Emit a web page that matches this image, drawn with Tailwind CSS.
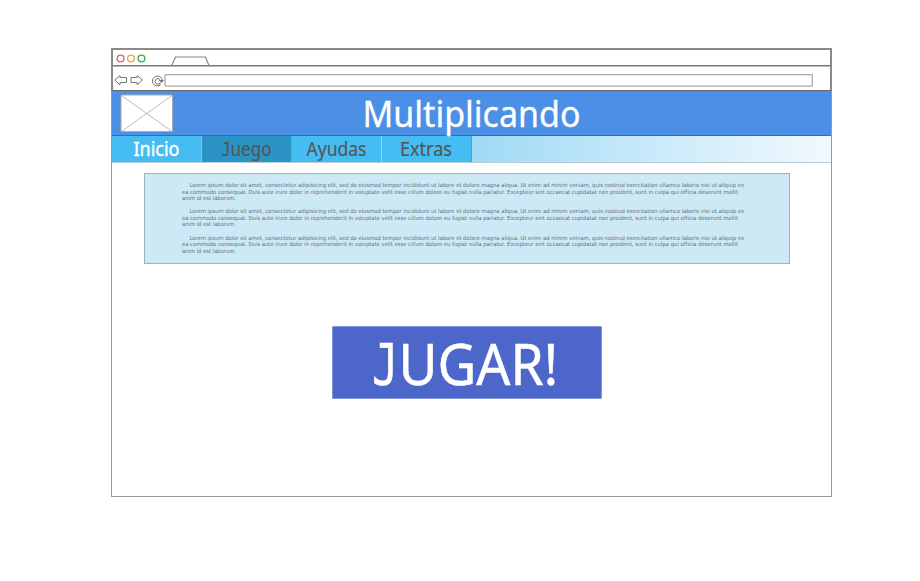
<!DOCTYPE html>
<html lang="es">
<head>
<meta charset="utf-8">
<title>Multiplicando</title>
<script src="https://cdn.jsdelivr.net/npm/@tailwindcss/browser@4"></script>
</head>
<body class="bg-white w-[920px] h-[581px] overflow-hidden pl-[111px] pt-[48px] font-['Noto_Sans','DejaVu_Sans',sans-serif]">
<div class="w-[721px] h-[449px] border border-[#999] flex flex-col">
  <header class="-m-px h-[43px] flex flex-col border-2 border-[#8a8a8a] border-b-[#666] border-b-1 box-border shrink-0 w-[721px]">
    <svg class="block w-[718px] h-[40px] overflow-visible" viewBox="113 50 718 40" fill="none">
      <g stroke-width="1.4"><circle cx="120.6" cy="58.5" r="3.4" stroke="#d0676c"/><circle cx="131" cy="58.5" r="3.4" stroke="#e8a251"/><circle cx="141.5" cy="58.5" r="3.4" stroke="#39ae4a"/></g>
      <path d="M113 65.8H831" stroke="#777" stroke-width="1.5"/>
      <path d="M171.8 65.5L175.5 57H205.5L209 65.5" stroke="#888" stroke-width="1.2"/>
      <g stroke="#777" stroke-width="1"><path d="M114.8 80L120 75.6V77.5H126.5V82.5H120V84.8Z"/><path d="M142.4 80L137.2 75.6V77.5H131V82.5H137.2V84.8Z"/>
      <path d="M160 85.3A5 5 0 1 1 162.3 79.8M160 83.2A2.8 2.8 0 1 1 160 79.5M160 83.2V85.3"/><path d="M159.2 80.4H163.4L161.5 82.6Z" fill="#777"/></g>
      <rect x="165" y="74.7" width="647.3" height="11.4" rx=".5" stroke="#aaa" stroke-width="1.3"/>
    </svg>
  </header>
  <div class="mt-px h-[45px] w-[719px] shrink-0 bg-[#4c8fe6] border-b border-[#3a6ba9]">
    <svg class="relative z-10 block w-[719px] h-[45px] overflow-visible" viewBox="112 91 719 45">
      <rect x="121" y="95" width="51.5" height="36.5" rx="1" fill="#fff" stroke="#aaa"/><path d="M121.5 95.5L172 131.5M172 95.5L121.5 131.5" stroke="#bbb"/>
      <text x="362.5" y="127.3" font-size="36.4" textLength="218" lengthAdjust="spacingAndGlyphs" fill="#fff" stroke="#fff" stroke-width=".3">Multiplicando</text>
    </svg>
  </div>
  <nav class="h-[27px] w-[719px] shrink-0 flex border-b border-[#b9cdd8]">
    <svg class="block w-[90px] h-[26px] bg-[#46bdf2]" viewBox="0 0 90 26"><text x="21.5" y="20" font-size="19" textLength="46" lengthAdjust="spacingAndGlyphs" fill="#fff" stroke="#fff" stroke-width=".35">Inicio</text><path d="M89.5 0V26" stroke="#77c7ea"/></svg>
    <svg class="block w-[90px] h-[26px] bg-[#2b94c5]" viewBox="0 0 90 26"><text y="20" font-size="19" fill="#555" stroke="#555" stroke-width=".15"><tspan x="19.5" font-family="DejaVu Sans Mono" textLength="9" lengthAdjust="spacingAndGlyphs">J</tspan><tspan x="28.5" textLength="41" lengthAdjust="spacingAndGlyphs">uego</tspan></text><path d="M89.5 0V26" stroke="#5faed2"/></svg>
    <svg class="block w-[90px] h-[26px] bg-[#46bdf2]" viewBox="0 0 90 26"><text x="14.5" y="20" font-size="19" textLength="60" lengthAdjust="spacingAndGlyphs" fill="#555" stroke="#555" stroke-width=".15">Ayudas</text><path d="M89.5 0V26" stroke="#90d3f2"/></svg>
    <svg class="block w-[90px] h-[26px] bg-[#46bdf2]" viewBox="0 0 90 26"><text x="18" y="20" font-size="19" textLength="52" lengthAdjust="spacingAndGlyphs" fill="#555" stroke="#555" stroke-width=".15">Extras</text><path d="M89.5 0V26" stroke="#6499b3"/></svg>
    <div class="flex-1 bg-linear-to-r from-[#9fdaf5] to-[#f1f9fd]"></div>
  </nav>
  <section class="mt-[10px] ml-[32px] w-[646px] h-[91px] shrink-0 bg-[#cde9f5] border border-[#9bb4bf]">
    <svg class="block w-[644px] h-[89px]" viewBox="145 174 644 89" font-size="5.6" fill="#60727b" font-family="DejaVu Sans">
      <g><text x="189.5" y="187" textLength="554.5" lengthAdjust="spacingAndGlyphs">Lorem ipsum dolor sit amet, consectetur adipisicing elit, sed do eiusmod tempor incididunt ut labore et dolore magna aliqua. Ut enim ad minim veniam, quis nostrud exercitation ullamco laboris nisi ut aliquip ex</text>
      <text x="182" y="193.5" textLength="556" lengthAdjust="spacingAndGlyphs">ea commodo consequat. Duis aute irure dolor in reprehenderit in voluptate velit esse cillum dolore eu fugiat nulla pariatur. Excepteur sint occaecat cupidatat non proident, sunt in culpa qui officia deserunt mollit</text>
      <text x="182" y="200" textLength="54" lengthAdjust="spacingAndGlyphs">anim id est laborum.</text></g>
      <g transform="translate(0 26.3)"><text x="189.5" y="187" textLength="554.5" lengthAdjust="spacingAndGlyphs">Lorem ipsum dolor sit amet, consectetur adipisicing elit, sed do eiusmod tempor incididunt ut labore et dolore magna aliqua. Ut enim ad minim veniam, quis nostrud exercitation ullamco laboris nisi ut aliquip ex</text>
      <text x="182" y="193.5" textLength="556" lengthAdjust="spacingAndGlyphs">ea commodo consequat. Duis aute irure dolor in reprehenderit in voluptate velit esse cillum dolore eu fugiat nulla pariatur. Excepteur sint occaecat cupidatat non proident, sunt in culpa qui officia deserunt mollit</text>
      <text x="182" y="200" textLength="54" lengthAdjust="spacingAndGlyphs">anim id est laborum.</text></g>
      <g transform="translate(0 52.6)"><text x="189.5" y="187" textLength="554.5" lengthAdjust="spacingAndGlyphs">Lorem ipsum dolor sit amet, consectetur adipisicing elit, sed do eiusmod tempor incididunt ut labore et dolore magna aliqua. Ut enim ad minim veniam, quis nostrud exercitation ullamco laboris nisi ut aliquip ex</text>
      <text x="182" y="193.5" textLength="556" lengthAdjust="spacingAndGlyphs">ea commodo consequat. Duis aute irure dolor in reprehenderit in voluptate velit esse cillum dolore eu fugiat nulla pariatur. Excepteur sint occaecat cupidatat non proident, sunt in culpa qui officia deserunt mollit</text>
      <text x="182" y="200" textLength="54" lengthAdjust="spacingAndGlyphs">anim id est laborum.</text></g>
    </svg>
  </section>
  <button class="mt-[62px] ml-[220px] w-[270px] h-[73px] shrink-0 bg-[#4c66c9] border border-[#8497d9] rounded-[1px]">
    <svg class="block w-[268px] h-[71px] overflow-visible" viewBox="333 327 268 71"><text y="384.8" font-size="57" fill="#fff" stroke="#fff" stroke-width=".5"><tspan x="372" font-family="DejaVu Sans Mono" textLength="26.5" lengthAdjust="spacingAndGlyphs">J</tspan><tspan x="398.5" textLength="159.5" lengthAdjust="spacingAndGlyphs">UGAR!</tspan></text></svg>
  </button>
</div>
</body>
</html>
